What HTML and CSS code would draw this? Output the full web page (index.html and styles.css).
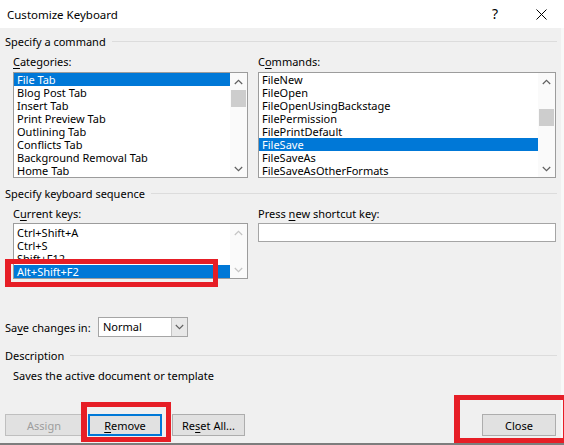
FILE: index.html
```html
<!DOCTYPE html>
<html>
<head>
<meta charset="utf-8">
<link rel="stylesheet" href="styles.css">
</head>
<body>
<div class="dialog">
  <div class="titlebar">
    <span class="title">Customize Keyboard</span>
    <div class="caption">
      <span class="cap-btn help">?</span>
      <span class="cap-btn">
        <svg width="11" height="11" viewBox="0 0 11 11"><path d="M0.5 0.5 L10.5 10.5 M10.5 0.5 L0.5 10.5" stroke="#000" stroke-width="1" fill="none"/></svg>
      </span>
    </div>
  </div>
  <div class="body">
    <div class="group first"><span>Specify a command</span><i class="rule"></i></div>
    <div class="cols">
      <div class="col">
        <div class="label"><u>C</u>ategories:</div>
        <div class="listbox tall">
          <ul class="items">
            <li class="sel">File Tab</li>
            <li>Blog Post Tab</li>
            <li>Insert Tab</li>
            <li>Print Preview Tab</li>
            <li>Outlining Tab</li>
            <li>Conflicts Tab</li>
            <li>Background Removal Tab</li>
            <li>Home Tab</li>
          </ul>
          <div class="vscroll">
            <span class="arrow"><svg width="9" height="6" viewBox="0 0 9 6"><path d="M0.8 5 L4.5 1.3 L8.2 5" stroke="#606060" stroke-width="1.2" fill="none"/></svg></span>
            <span class="track"><span class="thumb"></span></span>
            <span class="arrow"><svg width="9" height="6" viewBox="0 0 9 6"><path d="M0.8 1 L4.5 4.7 L8.2 1" stroke="#606060" stroke-width="1.2" fill="none"/></svg></span>
          </div>
        </div>
      </div>
      <div class="col">
        <div class="label">C<u>o</u>mmands:</div>
        <div class="listbox tall">
          <ul class="items">
            <li>FileNew</li>
            <li>FileOpen</li>
            <li>FileOpenUsingBackstage</li>
            <li>FilePermission</li>
            <li>FilePrintDefault</li>
            <li class="sel">FileSave</li>
            <li>FileSaveAs</li>
            <li>FileSaveAsOtherFormats</li>
          </ul>
          <div class="vscroll">
            <span class="arrow"><svg width="9" height="6" viewBox="0 0 9 6"><path d="M0.8 5 L4.5 1.3 L8.2 5" stroke="#606060" stroke-width="1.2" fill="none"/></svg></span>
            <span class="track"><span class="thumb mid"></span></span>
            <span class="arrow"><svg width="9" height="6" viewBox="0 0 9 6"><path d="M0.8 1 L4.5 4.7 L8.2 1" stroke="#606060" stroke-width="1.2" fill="none"/></svg></span>
          </div>
        </div>
      </div>
    </div>

    <div class="group second"><span>Specify keyboard sequence</span><i class="rule"></i></div>
    <div class="cols">
      <div class="col">
        <div class="label narrow">C<u>u</u>rrent keys:</div>
        <div class="listbox short">
          <ul class="items keys">
            <li>Ctrl+Shift+A</li>
            <li>Ctrl+S</li>
            <li>Shift+F12</li>
            <li class="sel">Alt+Shift+F2</li>
          </ul>
          <div class="vscroll">
            <span class="arrow"><svg width="9" height="6" viewBox="0 0 9 6"><path d="M0.8 5 L4.5 1.3 L8.2 5" stroke="#c4c4c4" stroke-width="1.2" fill="none"/></svg></span>
            <span class="track"></span>
            <span class="arrow"><svg width="9" height="6" viewBox="0 0 9 6"><path d="M0.8 1 L4.5 4.7 L8.2 1" stroke="#c4c4c4" stroke-width="1.2" fill="none"/></svg></span>
          </div>
        </div>
      </div>
      <div class="col">
        <div class="label narrow">Press <u>n</u>ew shortcut key:</div>
        <div class="textbox"></div>
      </div>
    </div>

    <div class="saverow">
      <span class="save-label">Sa<u>v</u>e changes in:</span>
      <div class="combo">
        <span class="combo-text">Normal</span>
        <span class="combo-btn"><svg width="9" height="6" viewBox="0 0 9 6"><path d="M0.8 1 L4.5 4.7 L8.2 1" stroke="#606060" stroke-width="1.1" fill="none"/></svg></span>
      </div>
    </div>

    <div class="group desc"><span>Description</span><i class="rule"></i></div>
    <div class="desc-text">Saves the active document or template</div>

    <div class="buttons">
      <button class="btn disabled w-assign">Assign</button>
      <button class="btn focused w-remove"><u>R</u>emove</button>
      <button class="btn w-reset">Re<u>s</u>et All...</button>
      <button class="btn w-close">Close</button>
    </div>
  </div>

  <div class="mark mark-keys"></div>
  <div class="mark mark-remove"></div>
  <div class="mark mark-close"></div>
</div>
</body>
</html>
```

FILE: styles.css
```css
* { box-sizing: border-box; }

html, body {
  margin: 0;
  padding: 0;
  background: #f0f0f0;
}

body {
  font-family: "Noto Sans", "Open Sans", sans-serif;
  font-size: 11px;
  color: #000;
}

u { text-decoration: underline; text-underline-offset: 2px; }

.dialog {
  position: relative;
  width: 564px;
  height: 445px;
  display: flex;
  flex-direction: column;
  background: #f0f0f0;
  border-bottom: 2px solid #7d7d7d;
  overflow: hidden;
}

.titlebar {
  height: 28px;
  flex: none;
  background: #fff;
  display: flex;
  align-items: center;
  justify-content: space-between;
  padding-left: 7px;
}

.title { font-size: 11.5px; }

.caption { display: flex; align-items: center; height: 28px; }

.cap-btn {
  width: 46px;
  height: 28px;
  display: flex;
  align-items: center;
  justify-content: center;
}

.help { font-size: 14px; padding-bottom: 1px; }

.body {
  flex: 1;
  display: flex;
  flex-direction: column;
  padding: 0 4px 0 5px;
  border-right: 3px solid #f8f8f8;
}

.group {
  display: flex;
  align-items: center;
  height: 14px;
  line-height: 14px;
}

.group.first { margin-top: 7px; }
.group.second { margin-top: 9px; }
.group.desc { margin-top: 12px; }

.rule {
  flex: 1;
  height: 0;
  margin-left: 6px;
  margin-top: -1px;
  border-top: 1px solid #dcdcdc;
}

.cols {
  display: grid;
  grid-template-columns: 235px 298px;
  column-gap: 10px;
  margin-left: 8px;
}

.label {
  height: 14px;
  line-height: 14px;
  margin-top: 6px;
  margin-bottom: 3px;
}

.label.narrow { margin-top: 6px; margin-bottom: 2px; }

.listbox {
  display: flex;
  background: #fff;
  border: 1px solid #9c9c9c;
}

.listbox.tall { height: 106px; }
.listbox.short { height: 56px; }

.items {
  flex: 1;
  list-style: none;
  margin: 0;
  padding: 0;
  overflow: hidden;
}

.items li {
  height: 13px;
  line-height: 13px;
  padding-left: 3px;
  white-space: nowrap;
}

.items li.sel {
  background: #0078d7;
  color: #fff;
}

.items.keys { padding-top: 2px; }

.vscroll {
  width: 17px;
  flex: none;
  display: flex;
  flex-direction: column;
  background: #fafafa;
}

.arrow {
  height: 17px;
  flex: none;
  display: flex;
  align-items: center;
  justify-content: center;
}

.track { flex: 1; padding: 0 1px; }

.thumb {
  display: block;
  height: 17px;
  background: #cdcdcd;
}

.thumb.mid { margin-top: 19px; }

.textbox {
  height: 19px;
  background: #fff;
  border: 1px solid #a5a5a5;
}

.saverow {
  display: flex;
  align-items: center;
  margin-top: 38px;
  height: 20px;
}

.save-label { width: 93px; flex: none; }

.combo {
  width: 90px;
  height: 20px;
  display: flex;
  background: #fff;
  border: 1px solid #a5a5a5;
}

.combo-text {
  flex: 1;
  padding-left: 4px;
  line-height: 18px;
}

.combo-btn {
  width: 16px;
  display: flex;
  align-items: center;
  justify-content: center;
  background: #e8e8e8;
  border-left: 1px solid #c4c4c4;
}

.desc-text {
  margin-top: 6px;
  padding-left: 8px;
  height: 14px;
  line-height: 14px;
}

.buttons {
  display: flex;
  margin-top: auto;
  margin-bottom: 7px;
}

.btn {
  height: 22px;
  padding: 0;
  font: inherit;
  color: #000;
  background: #e1e1e1;
  border: 1px solid #adadad;
}

.btn.disabled { color: #9d9d9d; border-color: #bfbfbf; }
.btn.focused { border: 2px solid #0078d7; }

.w-assign { width: 78px; }
.w-remove { width: 74px; margin-left: 5px; }
.w-reset { width: 73px; margin-left: 10px; }
.w-close { width: 74px; margin-left: auto; margin-right: 1px; }

.mark {
  position: absolute;
  border: 5px solid #e61e26;
}

.mark-keys { left: 5px; top: 259px; width: 213px; height: 28px; border-left-width: 6px; }
.mark-remove { left: 81px; top: 402px; width: 90px; height: 40px; border-left-width: 6px; }
.mark-close { left: 454px; top: 395px; width: 114px; height: 48px; border-left-width: 6px; }
```
